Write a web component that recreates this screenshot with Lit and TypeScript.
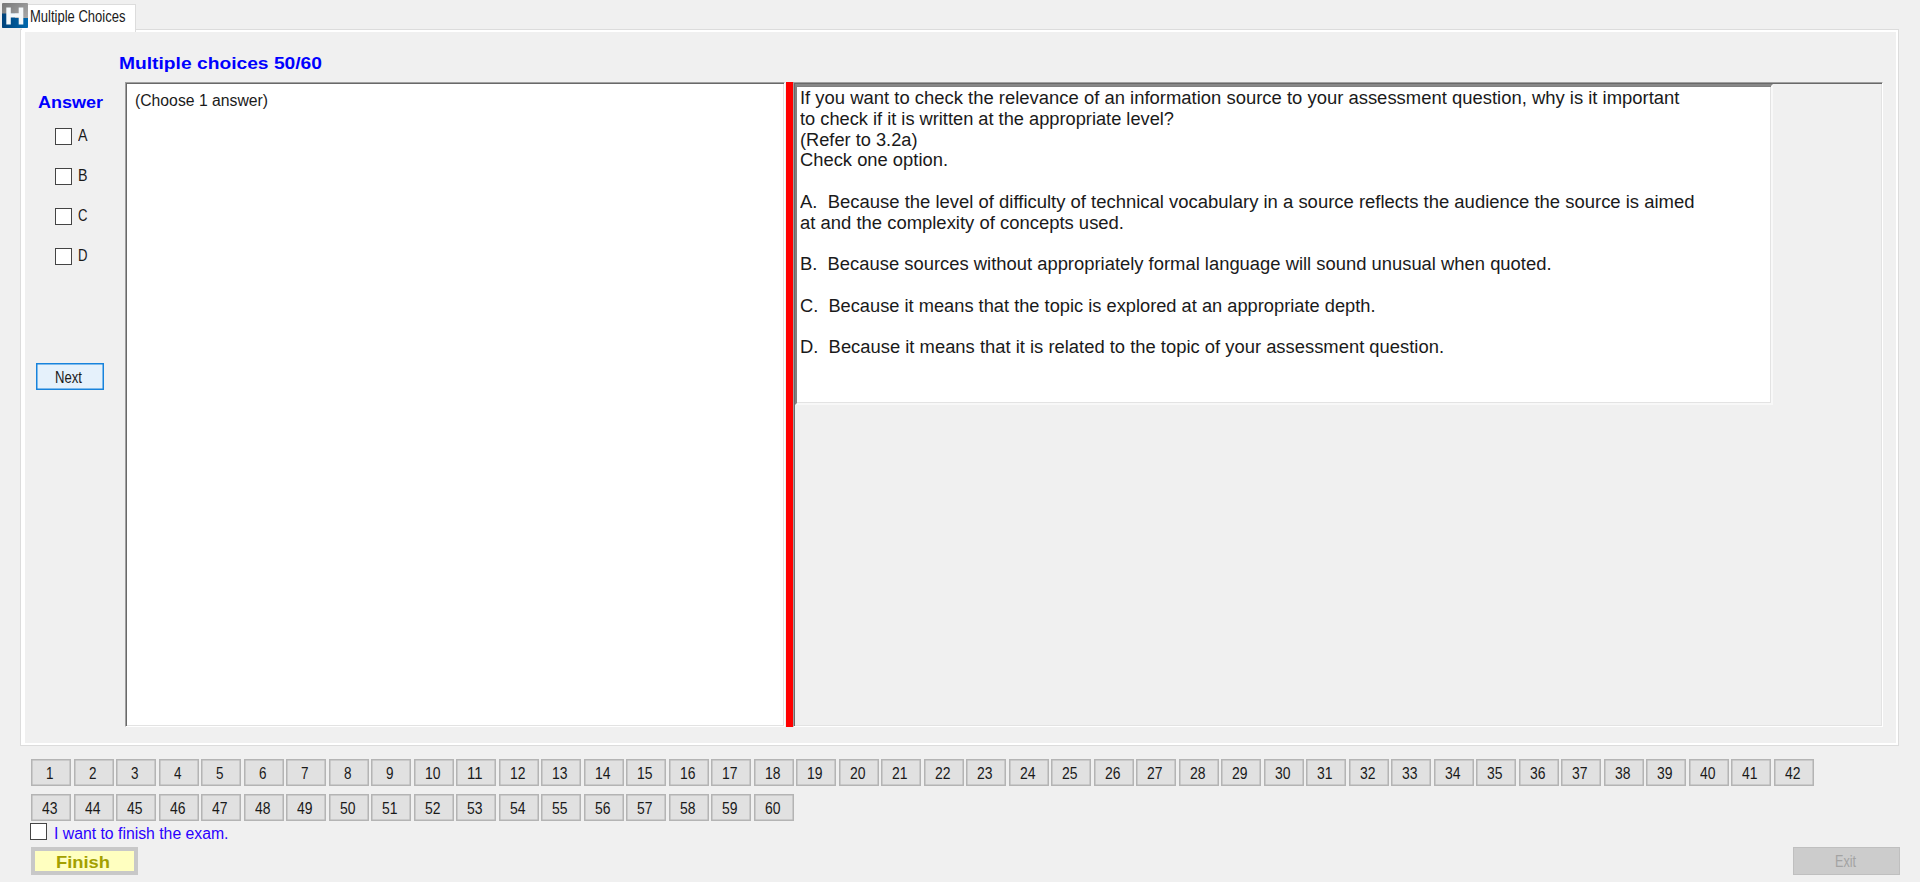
import { LitElement, html, css } from "lit";
import { customElement, property, query } from "lit/decorators.js";

/** One line of text, condensed or stretched to a given width. */
@customElement("fit-text")
class FitText extends LitElement {
  @property({ type: Number }) w = 0;
  @query(".line") line!: HTMLElement;

  static styles = css`
    :host { display: block; white-space: pre; flex: none; }
    .line { display: inline-block; transform-origin: 0 50%; }
  `;

  updated() {
    this.style.width = `${this.w}px`;
    this.line.style.transform = "none";
    const natural = this.line.getBoundingClientRect().width;
    if (natural) this.line.style.transform = `scaleX(${this.w / natural})`;
  }

  render() {
    return html`<span class="line"><slot @slotchange=${() => this.updated()}></slot></span>`;
  }
}

const QUESTION: [string, number][] = [
  ["If you want to check the relevance of an information source to your assessment question, why is it important", 879.5],
  ["to check if it is written at the appropriate level?", 374],
  ["(Refer to 3.2a)", 117.5],
  ["Check one option.", 148],
  ["", 0],
  ["A.  Because the level of difficulty of technical vocabulary in a source reflects the audience the source is aimed", 894.5],
  ["at and the complexity of concepts used.", 324],
  ["", 0],
  ["B.  Because sources without appropriately formal language will sound unusual when quoted.", 751.5],
  ["", 0],
  ["C.  Because it means that the topic is explored at an appropriate depth.", 575.5],
  ["", 0],
  ["D.  Because it means that it is related to the topic of your assessment question.", 644],
];

const range = (a: number, b: number) => Array.from({ length: b - a + 1 }, (_, i) => a + i);

@customElement("app-root")
class AppRoot extends LitElement {
  static styles = css`
    :host {
      display: block; width: 1920px; height: 882px; overflow: hidden;
      background: #f0f0f0; color: #1a1a1a;
      font-family: "Liberation Sans", Arial, sans-serif; font-size: 16px; line-height: 18px;
    }
    * { box-sizing: border-box; }
    .page { display: flex; flex-direction: column; height: 882px; }
    .tabs { display: flex; align-items: flex-start; height: 29px; padding: 3px 0 0 2px; flex: none; }
    .logo { display: block; width: 26px; height: 25px; z-index: 2; flex: none; }
    .tab {
      display: flex; width: 114px; height: 28px; margin: 1px 0 0 -6px; padding: 3px 0 0 8px;
      background: #fff; border: 1px solid #dcdcdc; border-width: 1px 1px 0 0; z-index: 1; flex: none;
    }
    .panel {
      display: flex; width: 1879px; height: 717px; margin-left: 20px; flex: none;
      border: 1px solid #dcdcdc; background: #f0f0f0;
      box-shadow: inset 4px 2px #fff, inset -2px -2px #fff;
    }
    .side { width: 104px; padding: 64px 0 0 15px; flex: none; }
    .heading, .answer { color: #00f; font-weight: bold; }
    .answer { font-size: 16px; margin: 0 0 0 2px; }
    .choices { display: flex; flex-direction: column; gap: 23px; margin: 16px 0 0 18.5px; }
    .choice { display: flex; align-items: flex-start; gap: 6.5px; height: 17px; }
    .choice fit-text { margin-top: -1px; }
    .box { width: 17px; height: 17px; border: 1.5px solid #444; background: #fff; flex: none; }
    .next {
      display: flex; justify-content: center; align-items: center; width: 68px; height: 27px;
      margin-top: 98px; background: #e5f1fb; border: 1px solid #1883dc;
      box-shadow: inset 0 0 0 .5px #1883dc; padding: 2px 3px 0 0;
    }
    .main { width: 1758px; padding-top: 24px; flex: none; }
    .heading { height: 28px; padding-top: 1px; font-size: 17px; margin-left: -6px; }
    .split { display: flex; height: 645px; }
    .sunken {
      border: 1px solid; border-color: #a0a0a0 #fff #fff #a0a0a0;
      box-shadow: inset 1px 1px #696969, inset -1px -1px #e3e3e3;
    }
    .instruction { width: 660px; padding: 9px 0 0 9px; background: #fff; }
    .splitter { width: 7px; margin-left: 1px; background: #f00; flex: none; }
    .right { width: 1090px; padding: 1px; margin-left: 0; }
    .question {
      width: 978px; height: 321px; padding: 2px 0 0 3px; background: #fff; font-size: 18.06px;
      border: 2px solid; border-color: #888 #f8f8f8 #f8f8f8 #808080;
      box-shadow: inset 0 1px #808080, inset -1px -1px #e3e3e3;
    }
    .qline { height: 20.77px; line-height: 20.77px; }
    .numbers { display: flex; flex-direction: column; gap: 8px; padding: 13px 0 0 31px; flex: none; }
    .row { display: flex; gap: 2.51px; }
    .num {
      display: flex; justify-content: center; align-items: center; width: 40px; height: 27px;
      background: #e1e1e1; border: 1px solid #b4b4b4; box-shadow: inset 0 0 0 .5px #b4b4b4; padding: 2px 2px 0 0;
    }
    .confirm { display: flex; gap: 6.5px; height: 24px; padding: 2px 0 0 30px; color: #2a00ff; flex: none; }
    .confirm fit-text { margin-top: 2px; }
    .actions { display: flex; justify-content: space-between; padding: 2px 20px 0 31px; flex: none; }
    .finish {
      display: flex; align-items: center; width: 107px; height: 28px; padding: 3px 0 0 21px;
      border: 4px solid #c8c8c8; background: #ffffc0; color: #a3a000; font-weight: bold; font-size: 17px;
    }
    .exit {
      display: flex; justify-content: center; align-items: center; width: 107px; height: 28px;
      border: 1px solid #bfbfbf; background: #ccc; color: #a3a3a3; padding: 1px 2px 0 0;
    }
  `;

  private num(n: number) {
    return html`<div class="num"><fit-text w=${n < 10 ? 7.5 : 15.5}>${n}</fit-text></div>`;
  }

  render() {
    return html`<div class="page">
      <div class="tabs">
        <svg class="logo" viewBox="0 0 26 25">
          <defs>
            <linearGradient id="g" x1="0" y1="0" x2="1" y2="1"><stop offset="0" stop-color="#777"/><stop offset="1" stop-color="#b5b5b5"/></linearGradient>
            <linearGradient id="b" x1="0" y1="0" x2="1" y2="0"><stop offset="0" stop-color="#00427a"/><stop offset="1" stop-color="#0068ad"/></linearGradient>
          </defs>
          <rect width="26" height="25" rx="1" fill="url(#g)"/>
          <path d="M0 10.5H13V15H26V24a1 1 0 0 1-1 1H1a1 1 0 0 1-1-1Z" fill="url(#b)"/>
          <path d="M4.3 4.5H8.8V10.3H16.7V4.5H21.3V21.5H16.7V14.5H8.8V21.5H4.3Z" fill="#f4f8fa"/>
        </svg>
        <div class="tab"><fit-text w="95.5">Multiple Choices</fit-text></div>
      </div>
      <div class="panel">
        <div class="side">
          <div class="answer"><fit-text w="65">Answer</fit-text></div>
          <div class="choices">
            ${["A", "B", "C", "D"].map((c) => html`<div class="choice"><div class="box"></div><fit-text w="9.5">${c}</fit-text></div>`)}
          </div>
          <div class="next"><fit-text w="27">Next</fit-text></div>
        </div>
        <div class="main">
          <div class="heading"><fit-text w="203">Multiple choices 50/60</fit-text></div>
          <div class="split">
            <div class="sunken instruction"><fit-text w="133">(Choose 1 answer)</fit-text></div>
            <div class="splitter"></div>
            <div class="sunken right">
              <div class="question">
                ${QUESTION.map(([t, w]) => html`<div class="qline">${t ? html`<fit-text w=${w}>${t}</fit-text>` : ""}</div>`)}
              </div>
            </div>
          </div>
        </div>
      </div>
      <div class="numbers">
        <div class="row">${range(1, 42).map((n) => this.num(n))}</div>
        <div class="row">${range(43, 60).map((n) => this.num(n))}</div>
      </div>
      <div class="confirm"><div class="box"></div><fit-text w="174.5">I want to finish the exam.</fit-text></div>
      <div class="actions">
        <div class="finish"><fit-text w="54">Finish</fit-text></div>
        <div class="exit"><fit-text w="21">Exit</fit-text></div>
      </div>
    </div>`;
  }
}
